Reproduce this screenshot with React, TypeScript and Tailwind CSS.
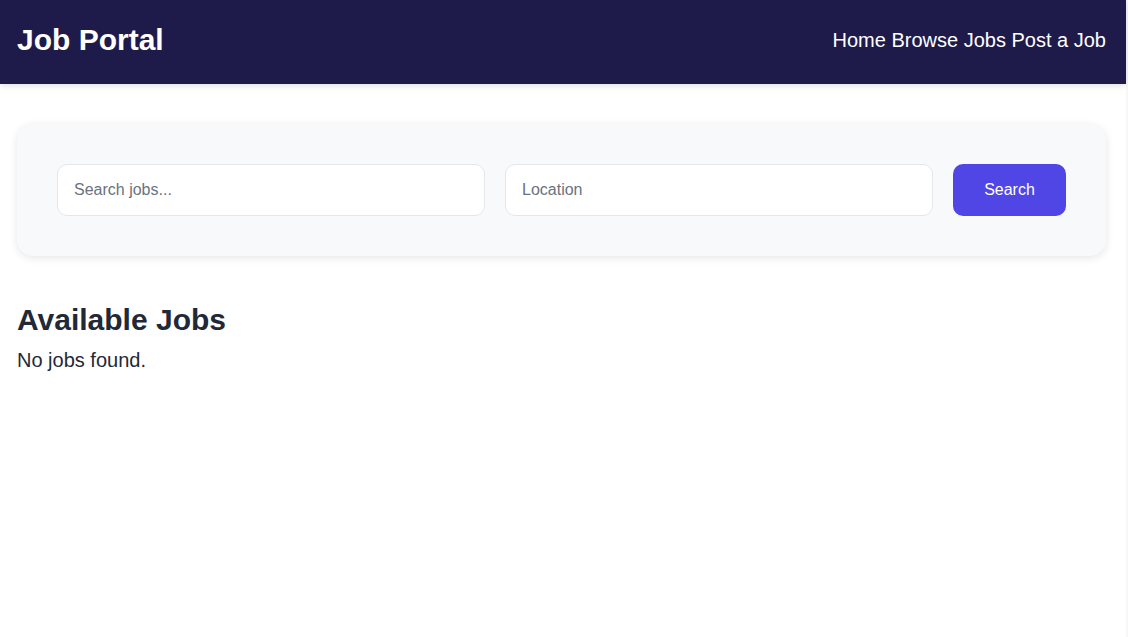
export default function App() {
  return (
    <div className="min-h-[637px] bg-white border-r-2 border-[#f7f7f7] font-['Liberation_Sans',Arial,sans-serif] text-[#1f2937]">
      <header className="h-[84px] bg-[#1e1b4b] text-white shadow-[0_2px_6px_rgba(0,0,0,0.12)] flex items-center justify-between pl-[17px] pr-5 pb-[5px]">
        <h1 className="text-[30px] leading-9 font-bold">Job Portal</h1>
        <nav className="text-[20px] leading-7">
          <a href="#">Home</a> <a href="#">Browse Jobs</a> <a href="#">Post a Job</a>
        </nav>
      </header>

      <main className="pl-[17px] pr-5 pt-10">
        <div className="bg-[#f8f9fa] rounded-2xl shadow-[0_2px_8px_rgba(0,0,0,0.1)] p-10 flex gap-5">
          <input
            className="flex-1 h-[52px] bg-white border border-[#e5e7eb] rounded-[10px] px-4 text-base placeholder:text-[#6b7280] outline-none"
            placeholder="Search jobs..."
          />
          <input
            className="flex-1 h-[52px] bg-white border border-[#e5e7eb] rounded-[10px] px-4 text-base placeholder:text-[#6b7280] outline-none"
            placeholder="Location"
          />
          <button className="w-[113px] h-[52px] bg-[#4f46e5] text-white text-base rounded-[10px]">
            Search
          </button>
        </div>

        <h2 className="mt-[46px] text-[30px] leading-9 font-bold">Available Jobs</h2>
        <p className="mt-2 text-[20px] leading-7">No jobs found.</p>
      </main>
    </div>
  );
}
